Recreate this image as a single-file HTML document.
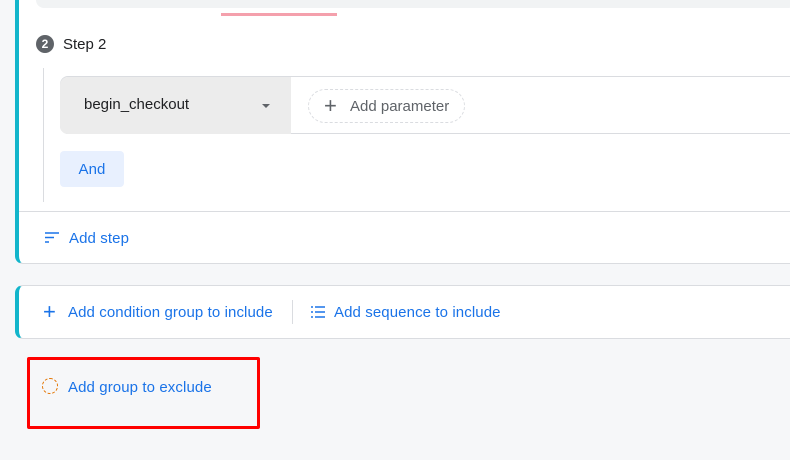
<!DOCTYPE html><html><head><style>
body{margin:0;width:790px;height:460px;background:#f6f7f9;font-family:"Liberation Sans",sans-serif;position:relative;overflow:hidden}
.a{position:absolute}
.blue{color:#1a73e8;font-size:15px;letter-spacing:0.1px}
</style></head><body>
<div class="a" style="left:15px;top:-10px;width:800px;height:274px;background:#fff;border-left:4px solid #12b5cb;border-bottom:1px solid #dadce0;border-radius:0 0 0 8px;box-sizing:border-box"></div>
<div class="a" style="left:36px;top:-10px;width:760px;height:18px;background:#f1f3f4;border-radius:8px"></div>
<div class="a" style="left:221px;top:13px;width:116px;height:3px;background:#f4a0ac"></div>
<div class="a" style="left:36px;top:35px;width:18px;height:18px;border-radius:50%;background:#5f6368;color:#fff;font-size:12px;font-weight:bold;text-align:center;line-height:18px">2</div>
<div class="a" style="left:63px;top:36px;font-size:15px;color:#202124">Step 2</div>
<div class="a" style="left:43px;top:68px;width:1px;height:134px;background:#dadce0"></div>
<div class="a" style="left:60px;top:76px;width:740px;height:58px;border:1px solid #dadce0;border-radius:8px 0 0 8px;box-sizing:border-box"></div>
<div class="a" style="left:60px;top:77px;width:231px;height:57px;background:#ececec;border-radius:8px 0 0 8px"></div>
<div class="a" style="left:84px;top:96px;font-size:15px;color:#202124;font-weight:500">begin_checkout</div>
<div class="a" style="left:262px;top:104px;width:0;height:0;border-left:4px solid transparent;border-right:4px solid transparent;border-top:4px solid #5f6368"></div>
<div class="a" style="left:308px;top:89px;width:157px;height:34px;border:1px dashed #dadce0;border-radius:17px;box-sizing:border-box"></div>
<div class="a" style="left:324px;top:93px;font-size:22px;color:#5f6368">+</div>
<div class="a" style="left:350px;top:98px;font-size:15px;color:#5f6368">Add parameter</div>
<div class="a blue" style="left:60px;top:152px;width:64px;height:36px;border-radius:4px;text-align:center;line-height:36px"></div>
<div class="a blue" style="left:60px;top:151px;width:64px;height:36px;background:#e8f0fe;border-radius:4px;text-align:center;line-height:38px">And</div>
<div class="a" style="left:19px;top:211px;width:780px;height:1px;background:#dadce0"></div>
<svg class="a" style="left:45px;top:232px" width="16" height="12"><path d="M0 1h14M0 5.5h9M0 10h4" stroke="#1a73e8" stroke-width="1.6"/></svg>
<div class="a blue" style="left:69px;top:230px">Add step</div>
<div class="a" style="left:15px;top:285px;width:800px;height:54px;background:#fff;border-left:4px solid #12b5cb;border-top:1px solid #dadce0;border-bottom:1px solid #dadce0;border-radius:8px 0 0 8px;box-sizing:border-box"></div>
<div class="a" style="left:43px;top:301px;font-size:22px;color:#1a73e8;line-height:22px">+</div>
<div class="a blue" style="left:68px;top:304px">Add condition group to include</div>
<div class="a" style="left:292px;top:300px;width:1px;height:24px;background:#dadce0"></div>
<svg class="a" style="left:310px;top:305px" width="16" height="14"><path d="M5 2h10M5 7h10M5 12h10M1 2h2M1 7h2M1 12h2" stroke="#1a73e8" stroke-width="1.5"/></svg>
<div class="a blue" style="left:334px;top:304px">Add sequence to include</div>
<div class="a" style="left:27px;top:357px;width:233px;height:72px;border:3px solid #f00;box-sizing:border-box;border-radius:2px"></div>
<div class="a" style="left:42px;top:378px;width:16px;height:16px;border:1px dashed #e37400;border-radius:50%;box-sizing:border-box"></div>
<div class="a blue" style="left:68px;top:379px">Add group to exclude</div>
</body></html>
